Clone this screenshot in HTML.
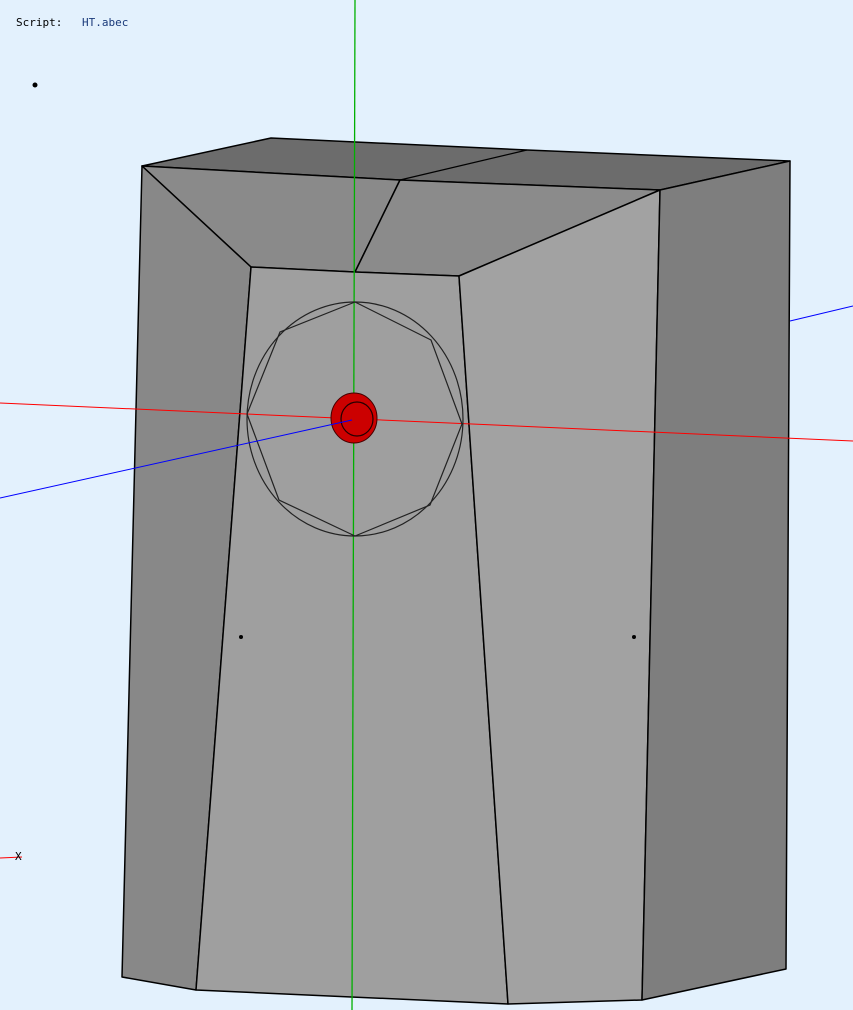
<!DOCTYPE html>
<html><head><meta charset="utf-8"><style>
html,body{margin:0;padding:0;background:#e3f1fd;width:853px;height:1010px;overflow:hidden}
svg{position:absolute;left:0;top:0}
.t{font-family:"DejaVu Sans Mono","Liberation Mono",monospace;font-size:11px}
</style></head><body>
<svg width="853" height="1010" viewBox="0 0 853 1010">
<line x1="790" y1="321" x2="853" y2="306" stroke="#0000ff" stroke-width="1"/>
<g stroke="#000" stroke-width="1.5" stroke-linejoin="round">
<polygon points="142,166 271,138 527,150 790,161 660,190 400,180" fill="#6c6c6c"/>
<polygon points="142,166 400,180 355,272 251,267" fill="#8a8a8a"/>
<polygon points="400,180 660,190 459,276 355,272" fill="#8b8b8b"/>
<polygon points="142,166 251,267 196,990 122,977" fill="#888888"/>
<polygon points="251,267 355,272 459,276 508,1004 196,990" fill="#9f9f9f"/>
<polygon points="459,276 660,190 642,1000 508,1004" fill="#a2a2a2"/>
<polygon points="660,190 790,161 786,969 642,1000" fill="#7e7e7e"/>
</g>
<line x1="400" y1="180" x2="527" y2="150" stroke="#000" stroke-width="1.2"/>
<line x1="0" y1="403" x2="853" y2="441" stroke="#ff0000" stroke-width="1"/>
<line x1="355" y1="0" x2="352" y2="1010" stroke="#00b000" stroke-width="1.3"/>
<ellipse cx="355" cy="419" rx="108" ry="117" fill="none" stroke="#222" stroke-width="1.2"/>
<polygon points="355,302 280,332 247,414 279,500 355,536 430,505 462,424 431,340" fill="none" stroke="#222" stroke-width="1.2"/>
<ellipse cx="354" cy="418" rx="23" ry="25" fill="#cc0000" stroke="#400" stroke-width="1"/>
<ellipse cx="357" cy="419" rx="16" ry="17" fill="none" stroke="#200" stroke-width="1.2"/>
<line x1="0" y1="498" x2="352" y2="420" stroke="#0000ff" stroke-width="1"/>
<circle cx="35" cy="85" r="2.5" fill="#000"/>
<circle cx="241" cy="637" r="2" fill="#000"/>
<circle cx="634" cy="637" r="2" fill="#000"/>
<line x1="0" y1="858" x2="22" y2="857" stroke="#ff0000" stroke-width="1"/>
<text x="15" y="860" class="t" font-size="13" fill="#000">X</text>
<text x="16" y="26" class="t" fill="#000">Script:</text>
<text x="82" y="26" class="t" fill="#1a3a7a">HT.abec</text>
</svg>
</body></html>
